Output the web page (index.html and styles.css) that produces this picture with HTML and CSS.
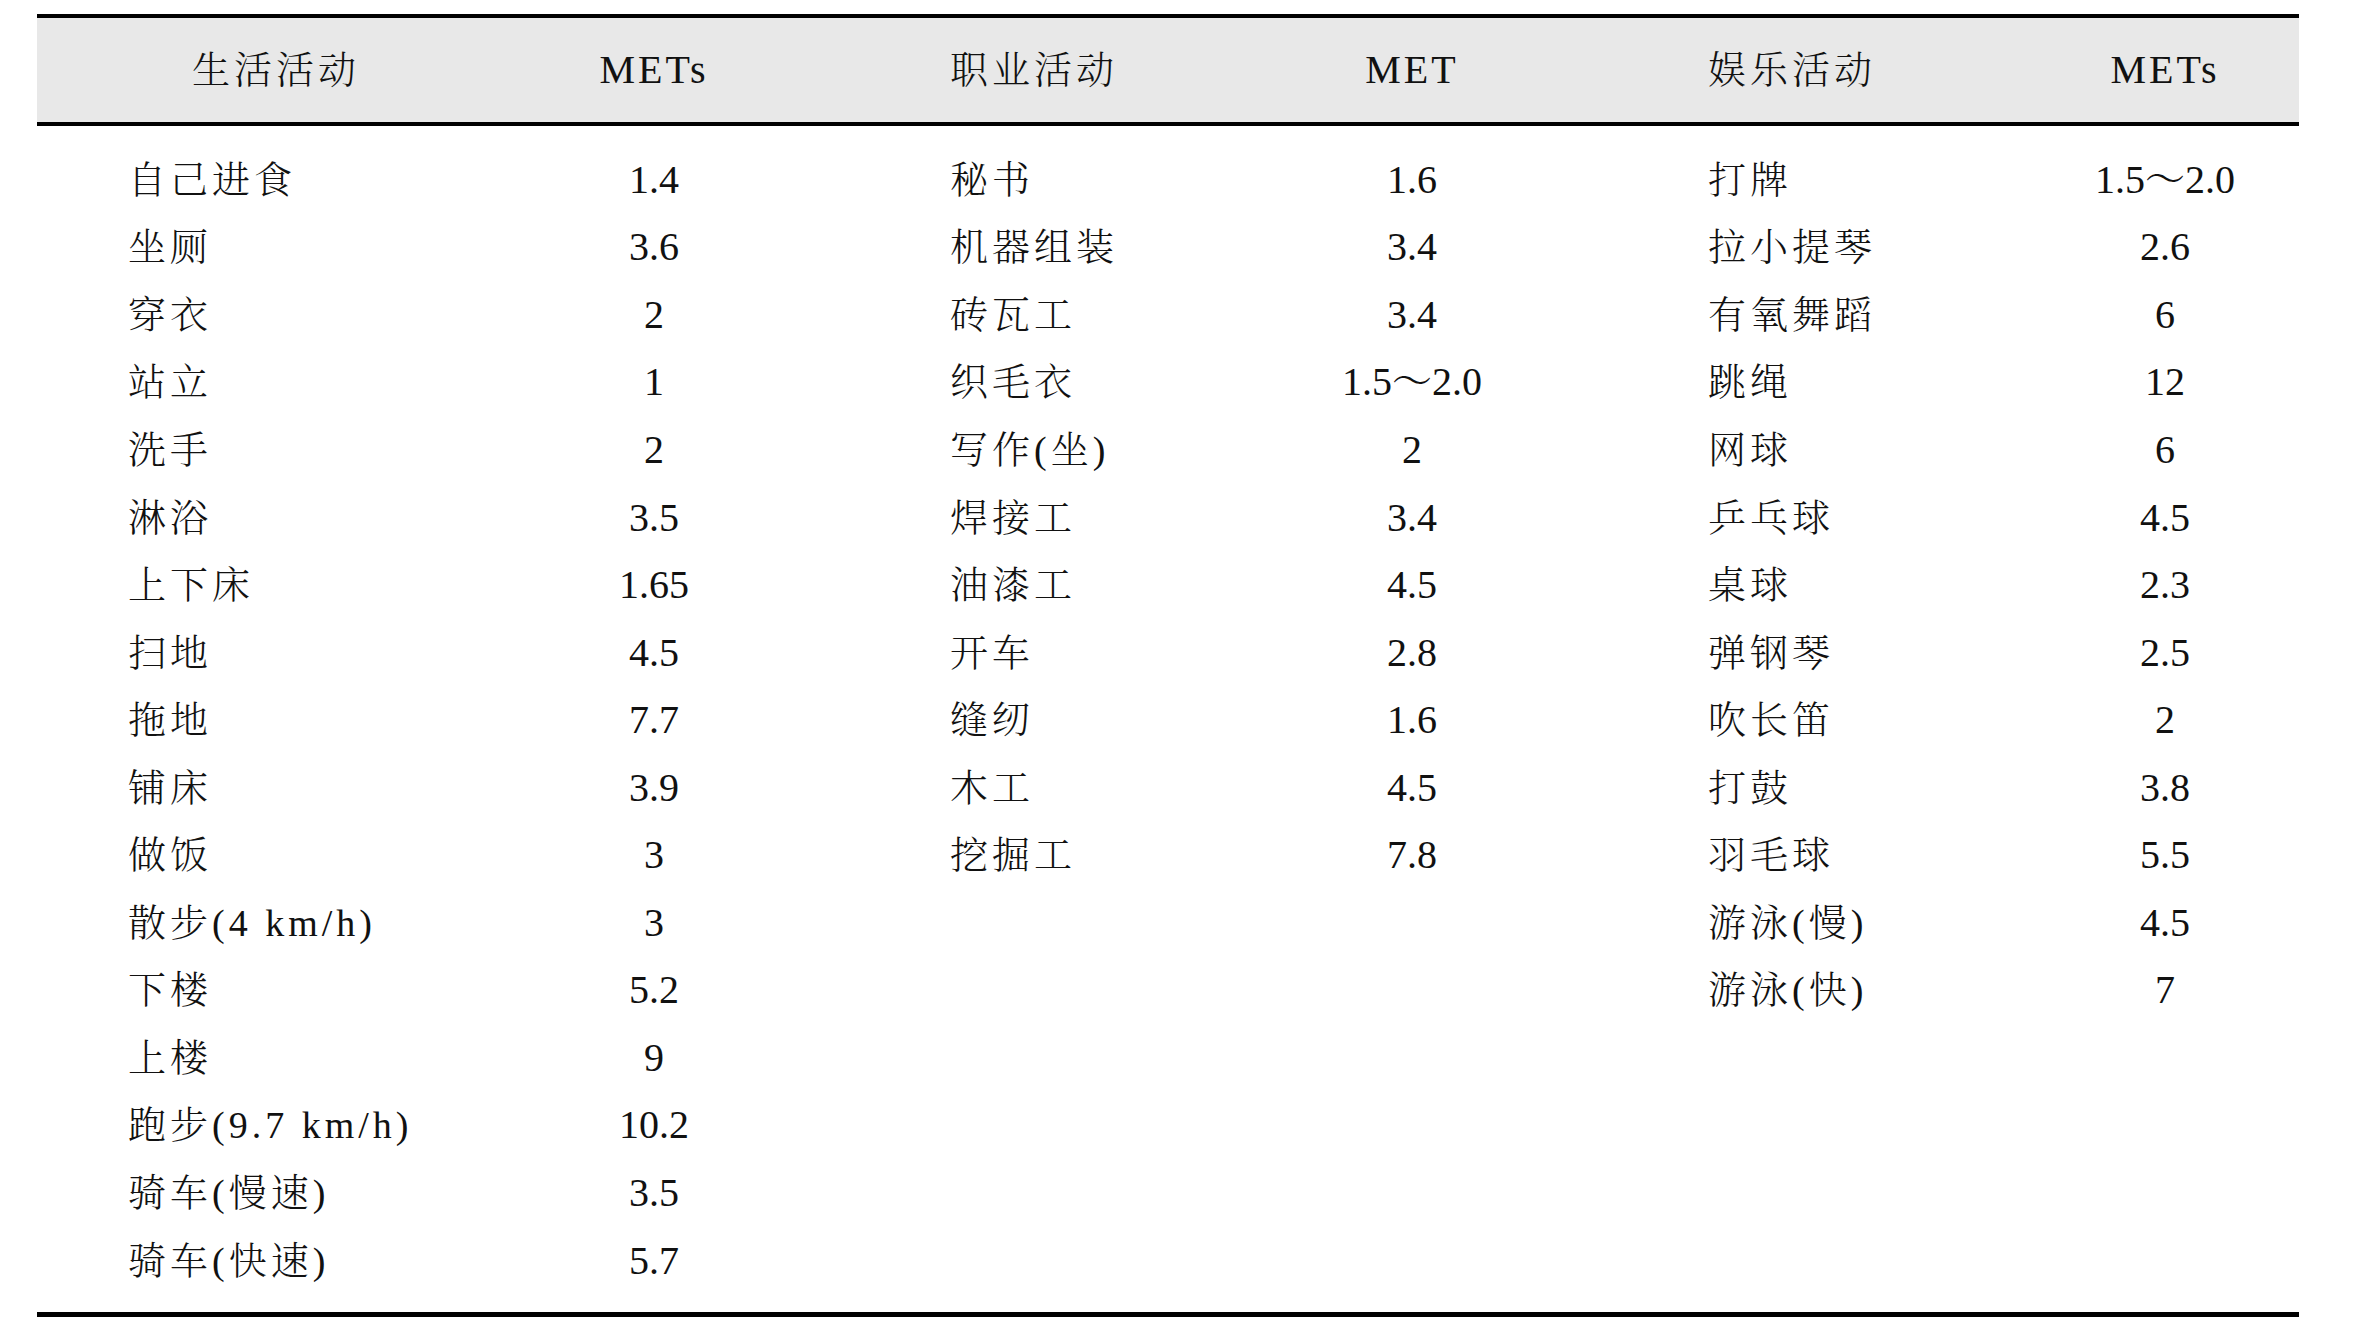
FILE: index.html
```html
<!DOCTYPE html>
<html lang="zh-CN">
<head>
<meta charset="utf-8">
<title>METs</title>
<link rel="stylesheet" href="styles.css">
</head>
<body>
<div class="table">
  <div class="head">
    <div class="cell act first">生活活动</div>
    <div class="cell val lat">METs</div>
    <div class="cell act">职业活动</div>
    <div class="cell val lat">MET</div>
    <div class="cell act">娱乐活动</div>
    <div class="cell val last lat">METs</div>
  </div>
  <div class="body">
    <div class="cell act first">自己进食</div><div class="cell val">1.4</div><div class="cell act">秘书</div><div class="cell val">1.6</div><div class="cell act">打牌</div><div class="cell val last">1.5～2.0</div>
    <div class="cell act first">坐厕</div><div class="cell val">3.6</div><div class="cell act">机器组装</div><div class="cell val">3.4</div><div class="cell act">拉小提琴</div><div class="cell val last">2.6</div>
    <div class="cell act first">穿衣</div><div class="cell val">2</div><div class="cell act">砖瓦工</div><div class="cell val">3.4</div><div class="cell act">有氧舞蹈</div><div class="cell val last">6</div>
    <div class="cell act first">站立</div><div class="cell val">1</div><div class="cell act">织毛衣</div><div class="cell val">1.5～2.0</div><div class="cell act">跳绳</div><div class="cell val last">12</div>
    <div class="cell act first">洗手</div><div class="cell val">2</div><div class="cell act">写作(坐)</div><div class="cell val">2</div><div class="cell act">网球</div><div class="cell val last">6</div>
    <div class="cell act first">淋浴</div><div class="cell val">3.5</div><div class="cell act">焊接工</div><div class="cell val">3.4</div><div class="cell act">乒乓球</div><div class="cell val last">4.5</div>
    <div class="cell act first">上下床</div><div class="cell val">1.65</div><div class="cell act">油漆工</div><div class="cell val">4.5</div><div class="cell act">桌球</div><div class="cell val last">2.3</div>
    <div class="cell act first">扫地</div><div class="cell val">4.5</div><div class="cell act">开车</div><div class="cell val">2.8</div><div class="cell act">弹钢琴</div><div class="cell val last">2.5</div>
    <div class="cell act first">拖地</div><div class="cell val">7.7</div><div class="cell act">缝纫</div><div class="cell val">1.6</div><div class="cell act">吹长笛</div><div class="cell val last">2</div>
    <div class="cell act first">铺床</div><div class="cell val">3.9</div><div class="cell act">木工</div><div class="cell val">4.5</div><div class="cell act">打鼓</div><div class="cell val last">3.8</div>
    <div class="cell act first">做饭</div><div class="cell val">3</div><div class="cell act">挖掘工</div><div class="cell val">7.8</div><div class="cell act">羽毛球</div><div class="cell val last">5.5</div>
    <div class="cell act first">散步(4 km/h)</div><div class="cell val">3</div><div class="cell act"></div><div class="cell val"></div><div class="cell act">游泳(慢)</div><div class="cell val last">4.5</div>
    <div class="cell act first">下楼</div><div class="cell val">5.2</div><div class="cell act"></div><div class="cell val"></div><div class="cell act">游泳(快)</div><div class="cell val last">7</div>
    <div class="cell act first">上楼</div><div class="cell val">9</div><div class="cell act"></div><div class="cell val"></div><div class="cell act"></div><div class="cell val last"></div>
    <div class="cell act first">跑步(9.7 km/h)</div><div class="cell val">10.2</div><div class="cell act"></div><div class="cell val"></div><div class="cell act"></div><div class="cell val last"></div>
    <div class="cell act first">骑车(慢速)</div><div class="cell val">3.5</div><div class="cell act"></div><div class="cell val"></div><div class="cell act"></div><div class="cell val last"></div>
    <div class="cell act first">骑车(快速)</div><div class="cell val">5.7</div><div class="cell act"></div><div class="cell val"></div><div class="cell act"></div><div class="cell val last"></div>
  </div>
</div>
</body>
</html>
```

FILE: styles.css
```css
html, body {
  margin: 0;
  padding: 0;
  background: #ffffff;
}

body {
  font-family: "Liberation Serif", "Noto Serif CJK SC", "Noto Sans CJK SC", serif;
  font-size: 38px;
  font-weight: 300;
  color: #111111;
}

.table {
  margin: 14px 0 0 37px;
  width: 2262px;
  border-top: 4px solid #000000;
  border-bottom: 5px solid #000000;
}

.head,
.body {
  display: grid;
  grid-template-columns: 463px 308px 450px 308px 445px 288px;
}

.head {
  height: 104px;
  background: #e8e8e8;
  border-bottom: 4px solid #000000;
  align-items: center;
}

.body {
  grid-auto-rows: 67.56px;
  align-items: center;
  padding: 20px 0 18px 0;
}

.cell {
  white-space: nowrap;
  line-height: 48px;
  letter-spacing: 4px;
}

.act {
  padding-left: 142px;
}

.act.first {
  padding-left: 91px;
}

.head .act.first {
  padding-left: 155px;
}

.val {
  text-align: center;
  font-size: 40px;
  letter-spacing: 0;
}

.val.last {
  padding-left: 20px;
}

.lat {
  letter-spacing: 3px;
}
```
